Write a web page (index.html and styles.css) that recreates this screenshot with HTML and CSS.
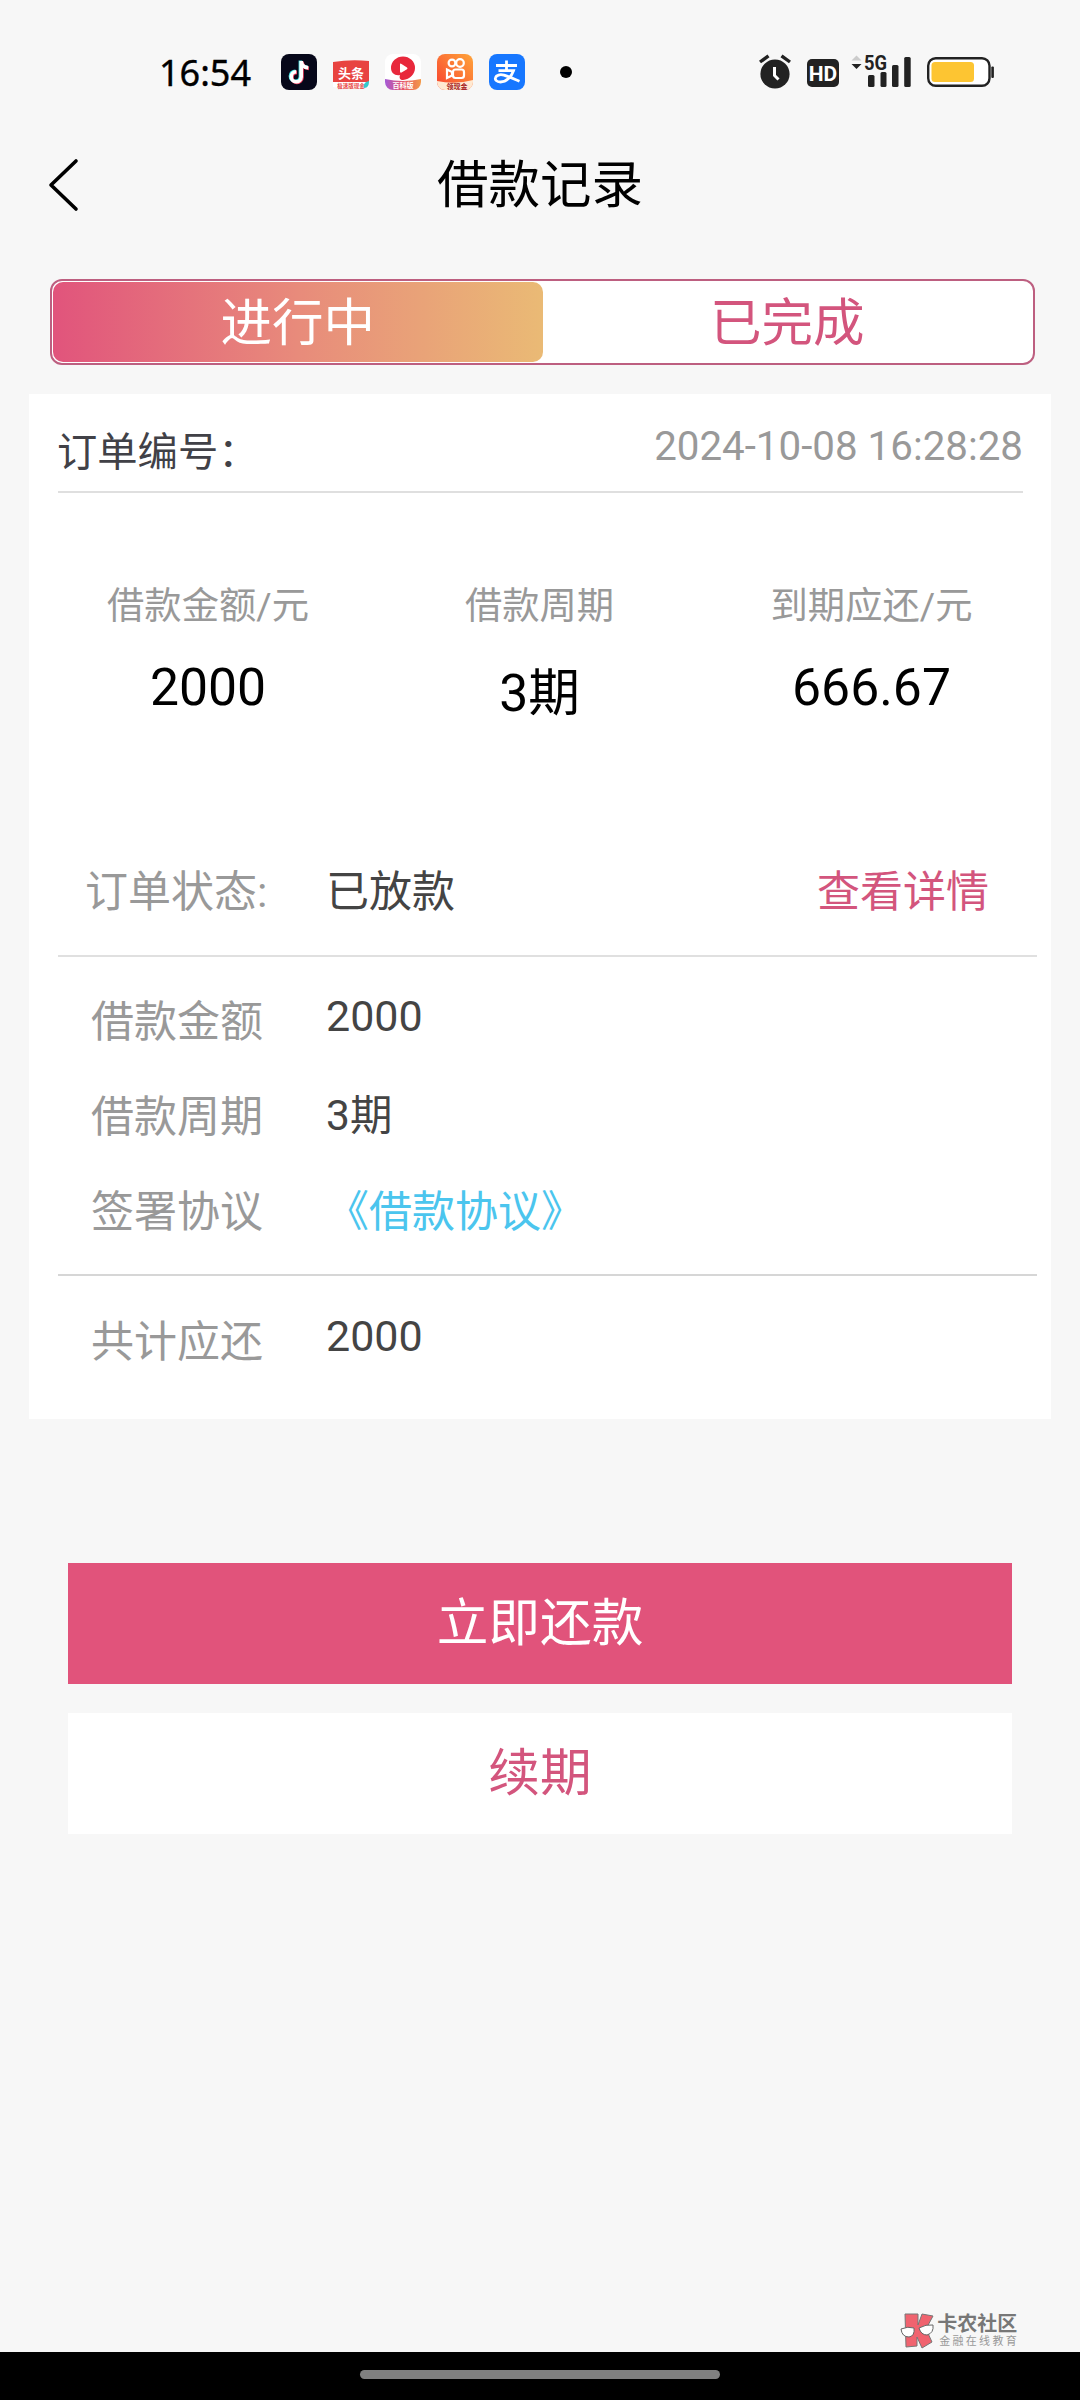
FILE: index.html
```html
<!DOCTYPE html>
<html lang="zh-CN">
<head>
<meta charset="utf-8">
<title>借款记录</title>
<link rel="stylesheet" href="styles.css">
</head>
<body>
<div class="screen">
  <header class="status-bar">
    <span class="clock">16:54</span>
    <div class="app-icons">
      <svg width="36" height="36" viewBox="0 0 36 36">
        <rect width="36" height="36" rx="8" fill="#07081a"/>
        <g fill="none" stroke-width="3.6">
          <path d="M19.4 6.500V22.500A5 5 0 1 1 14.400 17.200M19.400 7C20 11 23 13 26.500 13.200" stroke="#45e3e6"/>
          <path d="M21 7.500V23.500A5 5 0 1 1 16 18.400M21 8C21.600 12 24.600 14.200 28 14.400" stroke="#f0405f"/>
          <path d="M20.200 7V23A5 5 0 1 1 15.200 17.800M20.200 7.500C20.800 11.500 23.800 13.600 27.200 13.800" stroke="#fff"/>
        </g>
      </svg>
      <svg width="36" height="36" viewBox="0 0 36 36">
        <path d="M0 8Q18 5 36 7V28H0Z" fill="#e84340"/>
        <path d="M0 28H36V33Q18 36 0 33Z" fill="#fff"/>
        <text x="18" y="23.500" class="badge-title">头条</text>
        <text x="18" y="33.500" class="badge-note red">极速版现金</text>
        <path d="M31 34C30 30 32 28 36 27C36 31 35 34 31 34Z" fill="#35c8cb"/>
      </svg>
      <svg width="36" height="36" viewBox="0 0 36 36">
        <defs><linearGradient id="ribbon"><stop stop-color="#a55bd8"/><stop offset=".5" stop-color="#e5546a"/><stop offset="1" stop-color="#f39a48"/></linearGradient></defs>
        <rect width="36" height="36" rx="8" fill="#fff"/>
        <path d="M6 14A12 11.500 0 0 1 30 14C30 20 25 25.500 18 26C15 26 14 24 15 21C10 22 6 19 6 14Z" fill="#e8283c"/>
        <path d="M15 10.500Q15 9 16.500 10L22 13.500Q23 14.500 22 15.300L16.500 18.500Q15 19 15 17.500Z" fill="#fff"/>
        <path d="M0 25Q18 29 36 25V28A8 8 0 0 1 28 36H8A8 8 0 0 1 0 28Z" fill="url(#ribbon)"/>
        <text x="18" y="34" class="badge-note">百科版</text>
      </svg>
      <svg width="36" height="36" viewBox="0 0 36 36">
        <defs>
          <linearGradient id="flame" x1="1" y1="0" x2="0" y2="1"><stop stop-color="#ffa53a"/><stop offset="1" stop-color="#f8402f"/></linearGradient>
          <clipPath id="tile"><rect width="36" height="36" rx="8"/></clipPath>
        </defs>
        <g clip-path="url(#tile)">
          <rect width="36" height="36" fill="url(#flame)"/>
          <path d="M0 27Q18 31 36 26V36H0Z" fill="#ffe9d2"/>
        </g>
        <g fill="none" stroke="#fff" stroke-width="2.200">
          <circle cx="15" cy="9" r="3.400"/><circle cx="23" cy="9" r="3.800"/>
          <rect x="16" y="15.500" width="11" height="8.500" rx="2.500"/>
          <path d="M15 18L10 15.500V24L15 21.500Z"/>
        </g>
        <text x="20" y="34.500" class="badge-note dark">领现金</text>
      </svg>
      <svg width="36" height="36" viewBox="0 0 36 36">
        <rect width="36" height="36" rx="8" fill="#1777ff"/>
        <g fill="none" stroke="#fff" stroke-width="2.800">
          <path d="M7 11.500H28M17.500 6.500V16.500M9.500 16.700H24.500C22.500 22.500 17.500 28 11.500 28C7.500 28 5.800 25.800 6.500 23.600C7.200 21.200 11 20 15 21.200C19.500 22.600 25 25 30.500 27.200"/>
        </g>
      </svg>
    </div>
    <span class="more-dot"></span>
    <div class="system-icons">
      <svg width="32" height="36" viewBox="0 0 32 36" fill="#222">
        <circle cx="16" cy="20" r="14.600"/>
        <path d="M1 8L9.500 1.800M31 8L22.500 1.800" stroke="#222" stroke-width="3.400"/>
        <path d="M15.500 13V21.500L19.500 25.500" fill="none" stroke="#fff" stroke-width="3"/>
      </svg>
      <svg class="hd" width="32" height="28" viewBox="0 0 32 28">
        <rect width="32" height="28" rx="5" fill="#222"/>
        <text x="16" y="22" class="hd-label">HD</text>
      </svg>
      <svg class="signal" width="60" height="44" viewBox="0 -4 60 44" fill="#222">
        <path d="M0.500 6.500L5.500 1.500L10.500 6.500Z" fill="#ccc"/>
        <path d="M0.500 10L5.500 15L10.500 10Z"/>
        <rect x="17" y="21" width="6.500" height="12" rx="1.500"/>
        <rect x="29.500" y="18" width="6" height="15" rx="1.500"/>
        <rect x="41" y="11" width="6.500" height="22" rx="1.500"/>
        <rect x="53.200" y="3" width="6.500" height="30" rx="1.500"/>
        <text x="13" y="16" textLength="23" lengthAdjust="spacingAndGlyphs" class="net-label">5G</text>
      </svg>
      <svg class="battery" width="68" height="30" viewBox="0 0 68 30">
        <rect x="1.200" y="1.200" width="61.300" height="27.600" rx="7.500" fill="#fff" stroke="#222" stroke-width="2.400"/>
        <rect x="4.500" y="5" width="42.500" height="20" rx="3.500" fill="#fdc532"/>
        <rect x="64.300" y="9.500" width="2.600" height="11.500" rx="1" fill="#222"/>
      </svg>
    </div>
  </header>

  <nav class="title-bar">
    <svg class="back" width="32" height="54" viewBox="0 0 32 54"><path d="M28 3L3 27L28 51" fill="none" stroke="#000" stroke-width="3.600" stroke-linecap="round" stroke-linejoin="round"/></svg>
    <h1 class="title">借款记录</h1>
  </nav>

  <div class="tabs">
    <div class="tab active">进行中</div>
    <div class="tab">已完成</div>
  </div>

  <main class="card">
    <div class="order-head">
      <span class="order-no">订单编号：</span>
      <span class="order-time">2024-10-08 16:28:28</span>
    </div>
    <div class="summary">
      <div class="stat"><span class="stat-label">借款金额/元</span><span class="stat-value">2000</span></div>
      <div class="stat"><span class="stat-label">借款周期</span><span class="stat-value period">3期</span></div>
      <div class="stat"><span class="stat-label">到期应还/元</span><span class="stat-value">666.67</span></div>
    </div>
    <div class="state-row">
      <span class="state-label">订单状态:</span>
      <span class="state-value">已放款</span>
      <a class="detail-link">查看详情</a>
    </div>
    <div class="details">
      <div class="row"><span class="label">借款金额</span><span class="value num">2000</span></div>
      <div class="row"><span class="label">借款周期</span><span class="value term">3期</span></div>
      <div class="row"><span class="label">签署协议</span><a class="value agreement">《借款协议》</a></div>
    </div>
    <div class="total">
      <div class="row"><span class="label">共计应还</span><span class="value num">2000</span></div>
    </div>
  </main>

  <div class="actions">
    <button class="btn primary">立即还款</button>
    <button class="btn">续期</button>
  </div>

  <footer class="watermark">
    <svg width="34" height="36" viewBox="0 0 34 36">
      <g fill="#f0636f" stroke="#777" stroke-width="1">
        <path d="M5 1H18V12L22 1L33 3L26 16L32 29L22 35L17 24V33L6 34Z"/>
      </g>
      <g fill="#fff" stroke="#666" stroke-width="1">
        <path d="M1 16Q8 13 14 15Q15 23 9 24Q2 24 1 16Z"/>
        <path d="M19 15Q26 11 33 12Q34 20 27 22Q21 22 19 15Z"/>
      </g>
    </svg>
    <div class="brand"><span class="brand-name">卡农社区</span><span class="brand-sub">金融在线教育</span></div>
  </footer>
  <div class="nav-area"><span class="home-pill"></span></div>
</div>
</body>
</html>
```
FILE: styles.css
```css
* { box-sizing: border-box; }
body {
  margin: 0;
  background: #f7f7f7;
  font-family: Roboto, "Noto Sans CJK SC", sans-serif;
  color: #000;
}
.screen {
  width: 1080px;
  height: 2400px;
  display: flex;
  flex-direction: column;
  overflow: hidden;
}

.status-bar {
  height: 144px;
  display: flex;
  align-items: center;
  padding: 0 85px 0 159px;
}
.clock {
  width: 122px;
  font: 400 36px/48px "Noto Sans", sans-serif;
  -webkit-text-stroke: 0.4px #000;
  padding-top: 2px;
}
.app-icons { display: flex; gap: 16px; }
.badge-title { font-size: 13px; font-weight: 700; fill: #fff; text-anchor: middle; }
.badge-note { font-size: 7px; font-weight: 700; fill: #fff; text-anchor: middle; }
.badge-note.red { font-size: 5.5px; fill: #e84340; }
.badge-note.dark { fill: #a52020; }
.more-dot {
  width: 12px;
  height: 12px;
  margin-left: 35px;
  border-radius: 50%;
  background: #000;
}
.system-icons { display: flex; align-items: center; margin-left: auto; }
.hd { margin: 2px 0 0 16px; }
.hd-label { font-size: 21px; font-weight: 700; fill: #fff; text-anchor: middle; }
.signal { margin-left: 12px; }
.net-label { font-size: 20px; font-weight: 700; stroke: #f7f7f7; stroke-width: 1.5px; paint-order: stroke; }
.battery { margin-left: 16px; }

.title-bar {
  height: 80px;
  display: grid;
  grid-template-columns: 90px 1fr 90px;
  align-items: center;
}
.back { margin: 2px 0 0 48px; }
.title {
  margin: 0;
  padding-top: 4px;
  text-align: center;
  font-size: 51.5px;
  font-weight: 400;
  line-height: 76px;
}

.tabs {
  height: 86px;
  margin: 55px 45px 0 50px;
  padding: 1px;
  display: flex;
  background: #fff;
  border: 2px solid #bd5f80;
  border-radius: 12px;
}
.tab {
  flex: 1;
  border-radius: 10px;
  text-align: center;
  font-size: 51.5px;
  line-height: 83px;
  color: #d3557d;
}
.tab.active {
  color: #fff;
  background: linear-gradient(90deg, #e1547c, #e88b7b 50%, #eaba75);
}

.card {
  height: 1025px;
  margin: 29px 29px 0;
  background: #fff;
  padding: 0 14px 0 29px;
}
.order-head {
  height: 99px;
  margin-right: 14px;
  display: flex;
  justify-content: space-between;
  border-bottom: 2px solid #dfdfdf;
  font-size: 40.3px;
  line-height: 48px;
}
.order-no { margin-left: -1px; padding-top: 35px; color: #414147; }
.order-time { padding-top: 29px; color: #999; }

.summary {
  height: 337px;
  padding-top: 88px;
  display: grid;
  grid-template-columns: 300px 363px 301px;
}
.stat { display: flex; flex-direction: column; align-items: center; }
.stat-label { font-size: 37.3px; line-height: 50px; color: #999; }
.stat-value { margin-top: 26px; font-size: 51.7px; line-height: 62px; }
.stat-value.period { margin-top: 32px; }

.state-row {
  height: 127px;
  padding: 32px 48px 0 27px;
  display: flex;
  border-bottom: 2px solid #e0e0e0;
  font-size: 43px;
  line-height: 60px;
}
.state-label { width: 241px; color: #999; }
.state-value { color: #444; }
.detail-link { margin-left: auto; color: #d3557d; }

.details {
  height: 319px;
  padding: 35px 0 0 33px;
  border-bottom: 2px solid #d6d6d6;
}
.total { padding: 36px 0 0 33px; }
.row {
  height: 60px;
  margin-bottom: 35px;
  display: flex;
  font-size: 43px;
  line-height: 60px;
}
.label { width: 235px; color: #999; }
.value { color: #444; }
.value.num { margin-top: -6px; }
.value.term { margin-top: -1px; font-size: 42.5px; }
.value.agreement { color: #4bc5ee; }

.actions {
  margin: 144px 68px 0;
  display: flex;
  flex-direction: column;
  gap: 29px;
}
.btn {
  height: 121px;
  padding: 0;
  border: 0;
  background: #fff;
  color: #d3557d;
  font-family: inherit;
  font-size: 51.7px;
  line-height: 121px;
}
.btn.primary { background: #e1537b; color: #fff; }

.watermark {
  margin: auto 61px 3px auto;
  display: flex;
  align-items: center;
  gap: 3px;
}
.brand { display: flex; flex-direction: column; padding-top: 2px; }
.brand-name { font-size: 20px; font-weight: 700; line-height: 21px; color: #777; }
.brand-sub { padding-left: 2px; font-size: 11px; line-height: 14px; letter-spacing: 2.3px; color: #999; }
.nav-area {
  flex: none;
  height: 48px;
  background: #000;
  display: flex;
  justify-content: center;
  align-items: flex-start;
  padding-top: 18px;
}
.home-pill { width: 360px; height: 9px; border-radius: 5px; background: #808080; }
```
